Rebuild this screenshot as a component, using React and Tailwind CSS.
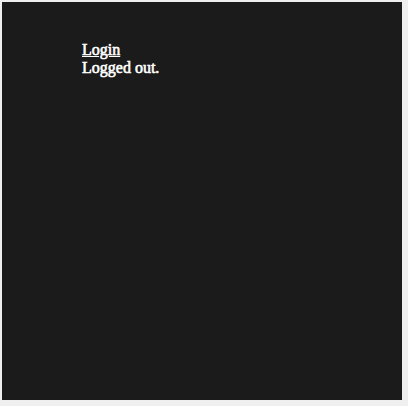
export default function App() {
  return (
    <div className="min-h-screen bg-[#efefef] p-[2px]">
      <div className="w-[400px] h-[398px] bg-[#1b1b1b] pl-[80px] pt-[39px] font-['Liberation_Serif',serif] text-white text-base leading-[normal] [-webkit-text-stroke:0.6px_white]">
        <a href="#" className="underline block w-fit">Login</a>
        <div>Logged out.</div>
      </div>
    </div>
  );
}
